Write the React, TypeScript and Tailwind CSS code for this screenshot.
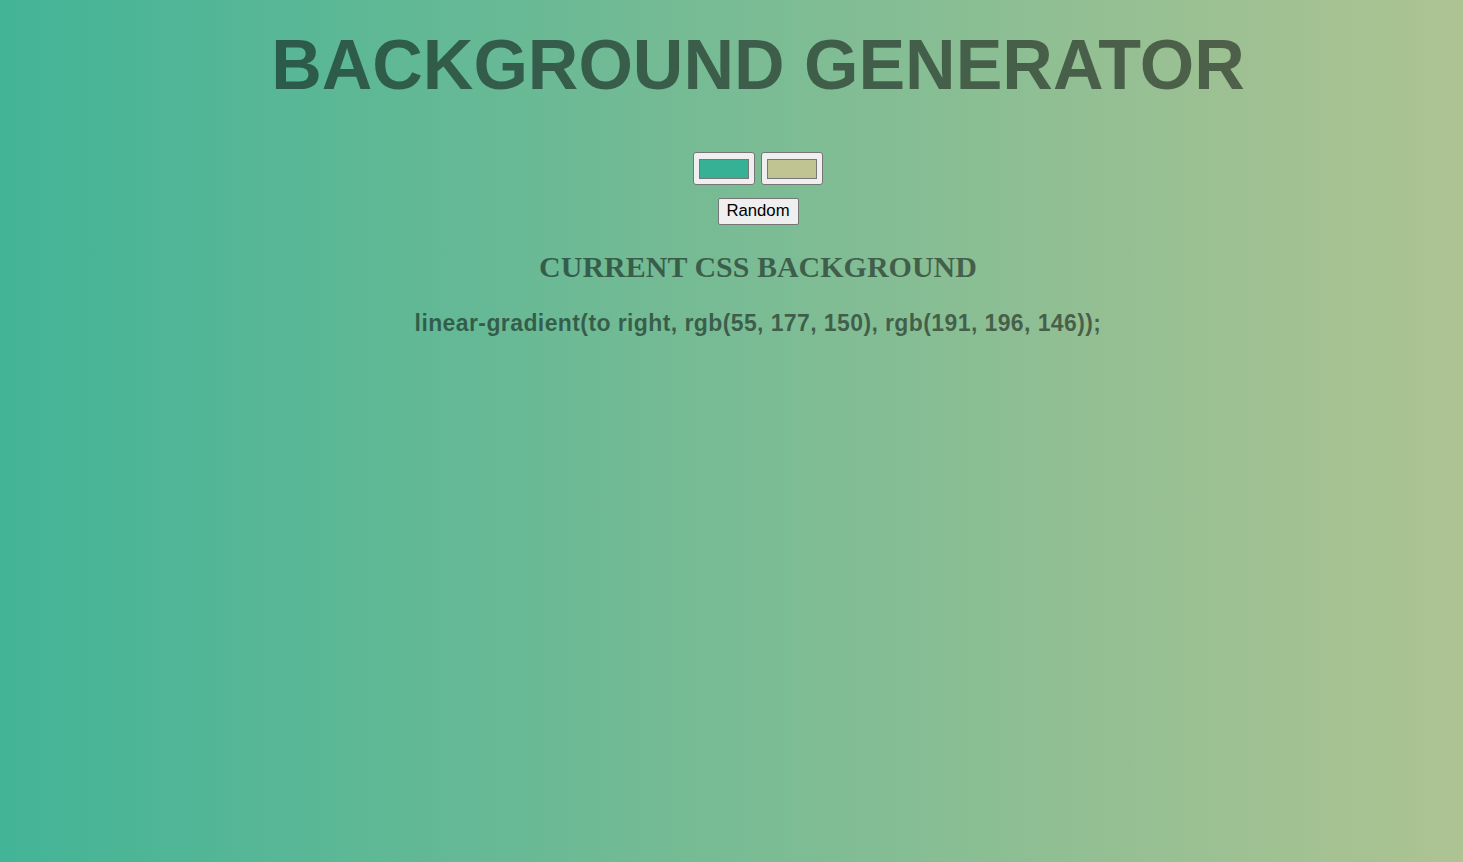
import React from "react";

function Swatch({ color }: { color: string }) {
  return (
    <div className="w-[62px] h-[33px] bg-[#efefef] border border-[#767676] rounded-[3px] flex items-center justify-center">
      <div className="w-[50px] h-[20px] border border-[#777777]" style={{ backgroundColor: color }} />
    </div>
  );
}

export default function App() {
  return (
    <div className="w-full h-[862px] overflow-hidden bg-[linear-gradient(to_right,#43b497,#aec392)] pl-[53px] flex flex-col items-center">
      <h1 className="mt-[25px] text-[70px] leading-[80px] font-bold uppercase text-black/50 font-['Liberation_Sans',Arial,sans-serif]">
        Background Generator
      </h1>
      <div className="mt-[47px] flex gap-[6px]">
        <Swatch color="#37b196" />
        <Swatch color="#bfc492" />
      </div>
      <button className="mt-[13px] w-[81px] h-[27px] bg-[#efefef] border border-[#767676] rounded-[2px] text-[16.7px] leading-none text-black font-['Liberation_Sans',Arial,sans-serif]">
        Random
      </button>
      <h3 className="mt-[25px] text-[30px] leading-[34px] font-bold text-black/50 font-['Liberation_Serif','Times_New_Roman',serif]">
        CURRENT CSS BACKGROUND
      </h3>
      <p className="mt-[26px] text-[23px] leading-[26px] tracking-[0.4px] font-bold text-black/50 font-['Liberation_Sans',Arial,sans-serif]">
        linear-gradient(to right, rgb(55, 177, 150), rgb(191, 196, 146));
      </p>
    </div>
  );
}
